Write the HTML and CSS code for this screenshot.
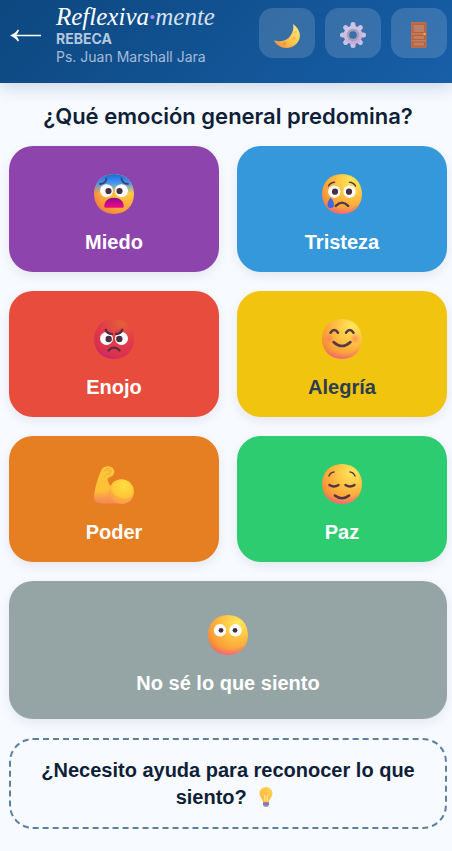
FILE: index.html
```html
<!DOCTYPE html>
<html lang="es">
<head>
  <meta charset="UTF-8" />
  <meta name="viewport" content="width=device-width, initial-scale=1.0" />
  <title>Reflexiva·mente</title>
  <link rel="stylesheet" href="styles.css">
</head>
<body>
  <!-- Shared gradients and face shape -->
  <svg class="defs" width="0" height="0" aria-hidden="true">
    <defs>
      <path id="head" d="M20 0C31.700 0 40 8.300 40 20S31.700 40 20 40S0 31.700 0 20S8.300 0 20 0Z" />
      <radialGradient id="face" cx="0.75" cy="0.2" r="0.95">
        <stop offset="0" stop-color="#ffe85e" />
        <stop offset="0.35" stop-color="#ffc844" />
        <stop offset="0.75" stop-color="#fb9f38" />
        <stop offset="1" stop-color="#ef7548" />
      </radialGradient>
      <radialGradient id="blush" cx="0.5" cy="0" r="1.02">
        <stop offset="0.82" stop-color="#f0569c" stop-opacity="0" />
        <stop offset="1" stop-color="#f0569c" stop-opacity="0.7" />
      </radialGradient>
      <linearGradient id="fear" x1="0" y1="0" x2="0" y2="1">
        <stop offset="0" stop-color="#176bd6" />
        <stop offset="0.22" stop-color="#3f94f4" />
        <stop offset="0.48" stop-color="#3f94f4" stop-opacity="0" />
      </linearGradient>
      <linearGradient id="mouth" x1="0" y1="0" x2="0" y2="1">
        <stop offset="0" stop-color="#8d0a8c" />
        <stop offset="1" stop-color="#ef0a86" />
      </linearGradient>
      <radialGradient id="anger" cx="0.7" cy="0.1" r="1">
        <stop offset="0" stop-color="#e5603a" />
        <stop offset="0.5" stop-color="#e13c48" />
        <stop offset="0.85" stop-color="#d8304f" />
        <stop offset="1" stop-color="#c51c86" />
      </radialGradient>
      <radialGradient id="cheek">
        <stop offset="0" stop-color="#ff6f5c" stop-opacity="0.6" />
        <stop offset="1" stop-color="#ff6f5c" stop-opacity="0" />
      </radialGradient>
      <linearGradient id="arm" x1="0" y1="0" x2="0" y2="1">
        <stop offset="0" stop-color="#ffc83a" />
        <stop offset="0.65" stop-color="#ffbf35" />
        <stop offset="1" stop-color="#ee8160" />
      </linearGradient>
      <radialGradient id="bicep" cx="0.6" cy="0.25" r="0.8">
        <stop offset="0" stop-color="#ffdf42" />
        <stop offset="0.6" stop-color="#ffc736" />
        <stop offset="1" stop-color="#f79a4b" />
      </radialGradient>
      <linearGradient id="moon" x1="1" y1="0" x2="0" y2="1">
        <stop offset="0" stop-color="#ffee87" />
        <stop offset="0.5" stop-color="#ffc64e" />
        <stop offset="1" stop-color="#f3883c" />
      </linearGradient>
      <linearGradient id="gear" x1="0" y1="0" x2="0.4" y2="1">
        <stop offset="0" stop-color="#d5cfe8" />
        <stop offset="1" stop-color="#c2acdc" />
      </linearGradient>
      <linearGradient id="bulb" x1="1" y1="0" x2="0" y2="1">
        <stop offset="0" stop-color="#ffd45a" />
        <stop offset="1" stop-color="#ffb638" />
      </linearGradient>
    </defs>
  </svg>

  <header class="topbar">
    <a class="back" href="#" aria-label="Volver">
      <svg width="32" height="14" viewBox="0 0 32 14" aria-hidden="true">
        <path d="M0 7.500C3.500 6 6.500 4 7.800 1.500L9 2.200C8.500 4 7.500 5.800 6.500 6.800H31V8.200H6.500C7.500 9.300 8.500 11 9 12.800L7.800 13.500C6.500 11 3.500 9 0 7.500Z" fill="#fff" />
      </svg>
    </a>
    <div class="identity">
      <div class="brand">Reflexiva<span class="dot">·</span><span class="brand-end">mente</span></div>
      <div class="user">REBECA</div>
      <div class="therapist">Ps. Juan Marshall Jara</div>
    </div>
    <nav class="actions">
      <button class="action" aria-label="Modo oscuro">
        <svg width="26" height="26" viewBox="0 0 26 26" aria-hidden="true">
          <path d="M19 2C24 5.500 27 11 25.500 16.500C24 22 18.500 26 12.500 26C7 26 2 23 0 18.300C5 20 11 19.500 15 15.500C18.800 11.500 20 7 19 2Z" fill="url(#moon)" />
          <circle cx="20" cy="16" r="1.500" fill="#eda33e" opacity="0.6" />
          <circle cx="10.500" cy="21.500" r="1.800" fill="#e98d37" opacity="0.6" />
          <circle cx="21.500" cy="10" r="1" fill="#eda33e" opacity="0.6" />
        </svg>
      </button>
      <button class="action" aria-label="Configuración">
        <svg width="26" height="26" viewBox="0 0 26 26" aria-hidden="true">
          <path d="M13 2.500V23.500M2.500 13H23.500M5.600 5.600L20.400 20.400M20.400 5.600L5.600 20.400" stroke="#cbc1e2" stroke-width="5" stroke-linecap="round" />
          <circle cx="13" cy="13" r="9.300" fill="url(#gear)" />
          <circle cx="13" cy="13" r="5" fill="#376fa9" stroke="#a79db8" stroke-width="2.400" />
        </svg>
      </button>
      <button class="action" aria-label="Salir">
        <svg width="26" height="26" viewBox="0 0 26 26" aria-hidden="true">
          <rect x="5" width="15.500" height="26" rx="1" fill="#bf6c4a" />
          <g fill="#bd8064" stroke="#aa5c41" stroke-width="0.800">
            <rect x="7" y="2.300" width="11.500" height="8.400" />
            <rect x="7" y="13.500" width="11.500" height="4" />
            <rect x="7" y="20" width="11.500" height="4" />
          </g>
          <path d="M6 12H19.500M6 18.700H19.500" stroke="#d98149" stroke-width="1" />
          <circle cx="18.500" cy="12" r="1.200" fill="#ffac32" />
        </svg>
      </button>
    </nav>
  </header>

  <main class="content">
    <h1 class="question">¿Qué emoción general predomina?</h1>

    <div class="emotions">
      <button class="card miedo">
        <svg class="emoji" viewBox="0 0 40 40" aria-hidden="true">
          <use href="#head" fill="url(#face)" />
          <use href="#head" fill="url(#fear)" />
          <path d="M6 10Q12 9.500 12.500 4.500M34 10Q28 9.500 27.500 4.500" fill="none" stroke="#4c3b66" stroke-width="1.800" stroke-linecap="round" />
          <circle cx="12.500" cy="16.700" r="6.500" fill="#fff" />
          <circle cx="27.500" cy="16.700" r="6.500" fill="#fff" />
          <circle cx="14.500" cy="17" r="3.100" fill="#482f42" />
          <circle cx="25.500" cy="17" r="3.100" fill="#482f42" />
          <path d="M10.300 32.500C10.300 27 14.500 23.700 20 23.700S29.700 27 29.700 32.500Q29.700 33.700 28.500 33.700H11.500Q10.300 33.700 10.300 32.500Z" fill="url(#mouth)" />
        </svg>
        <span>Miedo</span>
      </button>

      <button class="card tristeza">
        <svg class="emoji" viewBox="0 0 40 40" aria-hidden="true">
          <use href="#head" fill="url(#face)" />
          <use href="#head" fill="url(#blush)" />
          <path d="M6.500 12Q8.500 8.500 12.500 8.300M33.500 12Q31.500 8.500 27.500 8.300" fill="none" stroke="#5a3a38" stroke-width="1.500" stroke-linecap="round" />
          <circle cx="12.300" cy="17.700" r="6.200" fill="#fff" />
          <circle cx="27.500" cy="17.700" r="6.200" fill="#fff" />
          <circle cx="13" cy="17.700" r="3.100" fill="#482f42" />
          <circle cx="27" cy="17.700" r="3.100" fill="#482f42" />
          <path d="M13.800 31.800Q20 25.500 26.200 31.800" fill="none" stroke="#523650" stroke-width="2.400" stroke-linecap="round" />
          <path d="M8.700 23.500C10.800 25.500 11.900 28.500 11.900 30.800A3.200 3.200 0 0 1 5.500 30.800C5.500 28.500 6.800 25.500 8.700 23.500Z" fill="#3c69e5" />
        </svg>
        <span>Tristeza</span>
      </button>

      <button class="card enojo">
        <svg class="emoji" viewBox="0 0 40 40" aria-hidden="true">
          <use href="#head" fill="url(#anger)" />
          <circle cx="12.500" cy="19.500" r="6.500" fill="#fff" />
          <circle cx="27.500" cy="19.500" r="6.500" fill="#fff" />
          <path d="M10 9L21 12V17L13 14ZM30 9L19 12V17L27 14Z" fill="#df434a" />
          <circle cx="14.700" cy="20" r="3.200" fill="#482f42" />
          <circle cx="25.300" cy="20" r="3.200" fill="#482f42" />
          <path d="M11.800 10.800Q13 14.500 18 15M28.200 10.800Q27 14.500 22 15M14.500 31.500Q20 25.800 25.500 31.500" fill="none" stroke="#572d45" stroke-width="2.400" stroke-linecap="round" />
        </svg>
        <span>Enojo</span>
      </button>

      <button class="card alegria">
        <svg class="emoji" viewBox="0 0 40 40" aria-hidden="true">
          <use href="#head" fill="url(#face)" />
          <use href="#head" fill="url(#blush)" />
          <circle cx="7" cy="19.500" r="5.500" fill="url(#cheek)" />
          <circle cx="33" cy="19.500" r="5.500" fill="url(#cheek)" />
          <path d="M8.500 13.700Q12.200 8.500 16 13.700M24 13.700Q27.800 8.500 31.500 13.700M11.500 23Q20 31 28.500 23" fill="none" stroke="#57374a" stroke-width="2.500" stroke-linecap="round" />
        </svg>
        <span>Alegría</span>
      </button>

      <button class="card poder">
        <svg class="emoji" viewBox="0 0 40 40" aria-hidden="true">
          <path d="M8 5C10 2 15 1.500 18 3.500C21 5.500 21 10 18 12C15.500 13.500 14 13.800 13.500 14.500C14 18 15.500 21 17.500 24L33 24L39.500 28C39.500 35 36 39.500 29 39.500H7C2 39.500 0 37 0 33C1 22 4.500 12 8 5Z" fill="url(#arm)" />
          <circle cx="27.500" cy="27.500" r="12.300" fill="url(#bicep)" />
          <path d="M5 38C12 34 13 29 16.500 26C20 32 28 37 38 33C35 38 32 39.500 27 39.500H8Z" fill="#ff944b" opacity="0.4" />
          <path d="M10 7.500Q12 3 16.500 5.500Q18.500 8 15 9.500Q12 10.500 10.500 12M12.500 6.500Q14.500 5 15.500 7" fill="none" stroke="#f2a434" stroke-width="1" stroke-linecap="round" />
        </svg>
        <span>Poder</span>
      </button>

      <button class="card paz">
        <svg class="emoji" viewBox="0 0 40 40" aria-hidden="true">
          <use href="#head" fill="url(#face)" />
          <use href="#head" fill="url(#blush)" />
          <path d="M7 12Q8.500 8.300 12 8M33 12Q31.500 8.300 28 8" fill="none" stroke="#5a3a38" stroke-width="1.500" stroke-linecap="round" />
          <path d="M7.500 21Q12 24 16.500 21M23.500 21Q28 24 32.500 21M12.800 31.500Q20 37 27.200 31.500" fill="none" stroke="#523447" stroke-width="2.400" stroke-linecap="round" />
        </svg>
        <span>Paz</span>
      </button>

      <button class="card wide nose">
        <svg class="emoji" viewBox="0 0 40 40" aria-hidden="true">
          <use href="#head" fill="url(#face)" />
          <use href="#head" fill="url(#blush)" />
          <circle cx="12" cy="15.300" r="6.200" fill="#fff" />
          <circle cx="27.500" cy="15.300" r="6.200" fill="#fff" />
          <circle cx="13" cy="15.300" r="2.400" fill="#482f42" />
          <circle cx="27" cy="15.300" r="2.400" fill="#482f42" />
        </svg>
        <span>No sé lo que siento</span>
      </button>

      <button class="help">
        ¿Necesito ayuda para reconocer lo que siento?
        <svg class="bulb" width="20" height="20" viewBox="0 0 20 20" aria-hidden="true">
          <path d="M10 0C14 0 16.500 3 16.500 6.500C16.500 10 13.500 11.500 13 15H7C6.500 11.500 3.500 10 3.500 6.500C3.500 3 6 0 10 0Z" fill="url(#bulb)" />
          <path d="M8.800 14V9L7.800 7.500M11.200 14V9L12.200 7.500" fill="none" stroke="#fff0a0" stroke-width="1" />
          <path d="M7 15H13V18Q12.500 20 10 20T7 18Z" fill="#a08bb0" />
          <path d="M7 17H13" stroke="#74608c" stroke-width="1" />
        </svg>
      </button>
    </div>
  </main>
</body>
</html>
```
FILE: styles.css
```css
* {
  box-sizing: border-box;
}
body {
  margin: 0;
  min-height: 100vh;
  background: #f7faff;
  color: #0f1f38;
  font-family: Inter, sans-serif;
}
button {
  border: none;
  cursor: pointer;
}
svg {
  display: block;
}
.defs {
  position: absolute;
}

/* Header */
.topbar {
  display: flex;
  align-items: flex-start;
  padding: 8px 5px 17px 10px;
  background: linear-gradient(135deg, #0d477f, #175fa8);
  box-shadow: 0 4px 16px rgba(13, 71, 127, 0.2);
}
.back {
  padding: 20px 0 0;
}
.identity {
  flex: 1;
  margin: -5px 0 0 14px;
  font-size: 14px;
  line-height: 18px;
  color: #a5bcd8;
  white-space: nowrap;
}
.brand {
  font-family: Georgia, "Liberation Serif", serif;
  font-size: 25px;
  line-height: 27px;
  font-style: italic;
  font-weight: 500;
  color: #fff;
}
.brand-end {
  color: #d5e1ee;
}
.dot {
  color: #a78bfa;
  font-weight: 700;
}
.user {
  font-weight: 700;
  color: #b3c8df;
}
.actions {
  display: flex;
  gap: 10px;
}
.action {
  display: flex;
  justify-content: center;
  width: 56px;
  height: 50px;
  padding: 14px 0 0;
  border-radius: 14px;
  background: rgba(255, 255, 255, 0.15);
}

/* Emotions */
.content {
  padding: 19px 5px 22px 9px;
}
.question {
  margin: 0 0 16px;
  font-size: 22px;
  line-height: 28px;
  font-weight: 600;
  text-align: center;
}
.emotions {
  display: grid;
  grid-template-columns: 1fr 1fr;
  gap: 19px 18px;
}
.card {
  display: flex;
  flex-direction: column;
  align-items: center;
  gap: 17px;
  padding: 28px 12px 18px;
  border-radius: 24px;
  box-shadow: 0 4px 12px rgba(15, 31, 56, 0.08);
  color: #fff;
  font-family: "Liberation Sans", Arial, sans-serif;
  font-size: 20px;
  line-height: 23px;
  font-weight: 700;
}
.emoji {
  width: 40px;
  height: 40px;
}
.miedo {
  background: #8e44ad;
}
.tristeza {
  background: #3498db;
}
.enojo {
  background: #e74c3c;
}
.alegria {
  background: #f1c40f;
  color: #2c3e50;
}
.poder {
  background: #e67e22;
}
.paz {
  background: #2ecc71;
}
.nose {
  background: #95a5a6;
}
.wide {
  grid-column: 1 / -1;
  padding: 34px 12px 24px;
}
.help {
  grid-column: 1 / -1;
  padding: 17px 24px 16px;
  border: 2px dashed #5d7fa3;
  border-radius: 24px;
  background: transparent;
  color: #0f1f38;
  font-family: "Liberation Sans", Arial, sans-serif;
  font-size: 20px;
  line-height: 27px;
  font-weight: 700;
}
.bulb {
  display: inline-block;
  margin: 0 4px;
  vertical-align: -3px;
}
```
